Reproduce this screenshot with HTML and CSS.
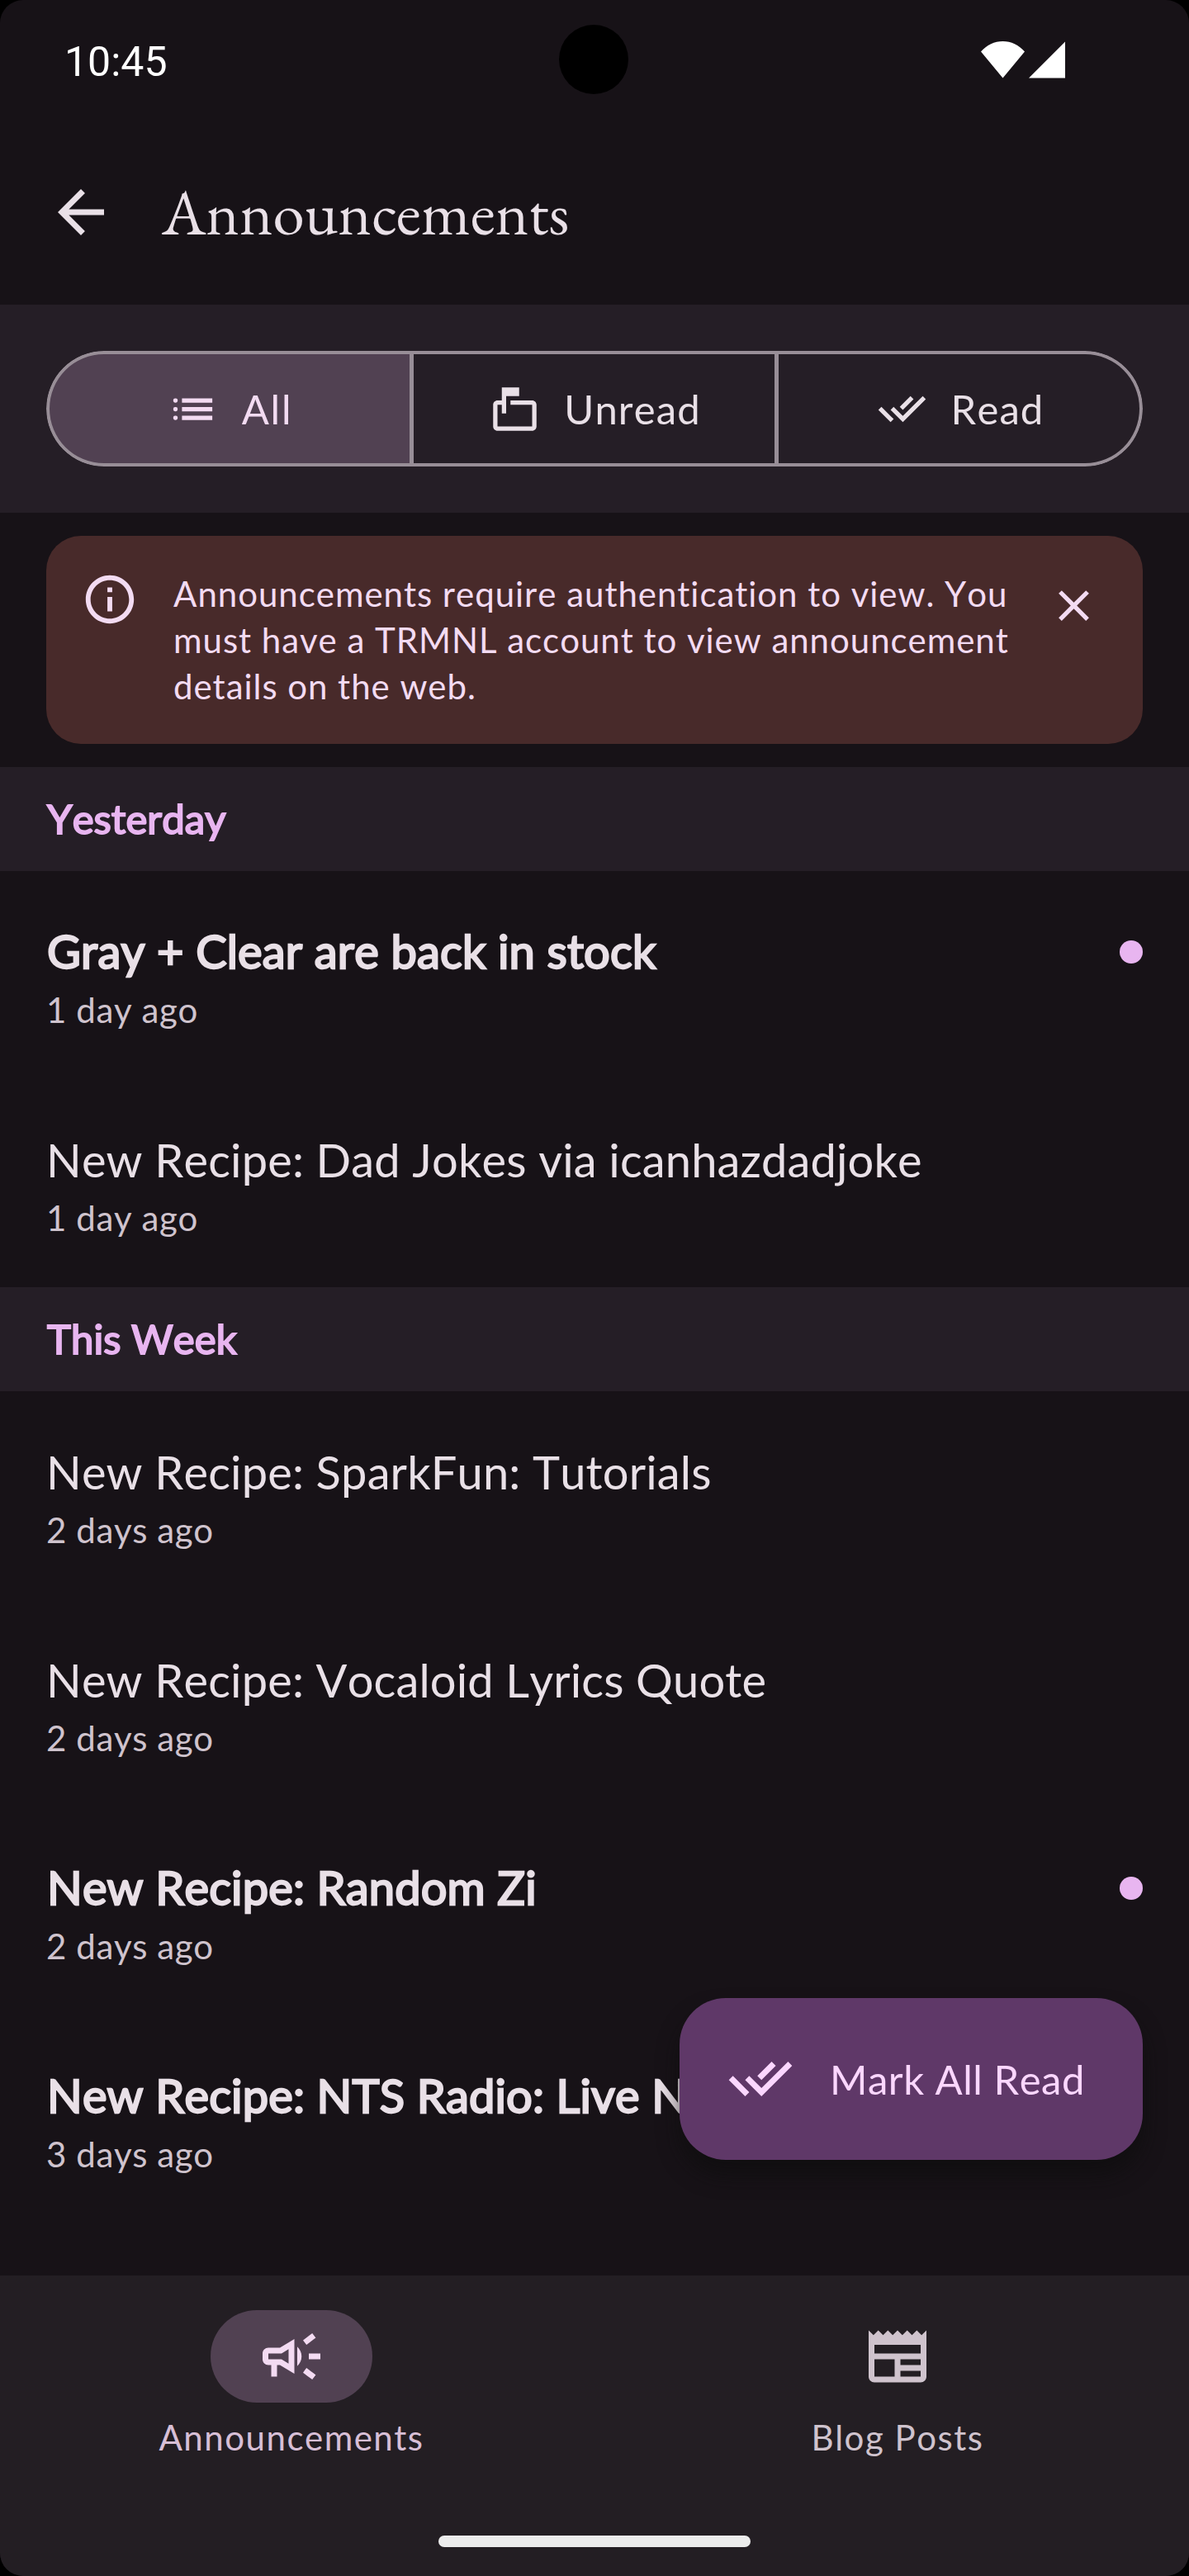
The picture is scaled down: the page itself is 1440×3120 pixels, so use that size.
FILE: index.html
```html
<!DOCTYPE html>
<html lang="en">
<head>
<meta charset="utf-8">
<title>Announcements</title>
<link rel="stylesheet" href="styles.css">
</head>
<body>
<div class="screen">
  <div class="status-bar">
    <span class="clock">10:45</span>
    <span class="camera"></span>
    <svg class="status-icons" viewBox="0 0 102 45"><path d="M0 12.5C7 4.500 16.500 0 26.500 0S46 4.500 53 12.500L26.500 44.500zM102 .5V44.500H58z"/></svg>
  </div>
  <header class="app-bar">
    <svg class="icon-24" viewBox="0 0 24 24"><path d="M20 11H7.830l5.590-5.590L12 4l-8 8 8 8 1.410-1.410L7.830 13H20z"/></svg>
    <h1 class="app-title">Announcements</h1>
  </header>
  <div class="filter-bar">
    <div class="segments">
      <div class="segment selected">
        <svg class="icon-18" viewBox="0 0 24 24"><path d="M7 7h14v2H7zM7 11h14v2H7zM7 15h14v2H7z"/><rect x="3" y="7" width="2" height="2" rx=".8"/><rect x="3" y="11" width="2" height="2" rx=".8"/><rect x="3" y="15" width="2" height="2" rx=".8"/></svg>
        <span>All</span>
      </div>
      <div class="segment">
        <svg class="icon-18" viewBox="0 0 24 24"><path d="M20 8H10v2h10v10H4V10h2v4h2V6h6V2H6v6H4c-1.100 0-2 .9-2 2v10c0 1.100.9 2 2 2h16c1.100 0 2-.9 2-2V10c0-1.100-.9-2-2-2z"/></svg>
        <span>Unread</span>
      </div>
      <div class="segment">
        <svg class="icon-18" viewBox="0 -960 960 960"><path d="M268-240 42-466l57-56 170 170 56 56-57 56Zm226 0L268-466l56-57 170 170 368-368 56 57-424 424Zm0-226-57-56 198-198 57 56-198 198Z"/></svg>
        <span>Read</span>
      </div>
    </div>
  </div>
  <div class="notice">
    <svg class="icon-20" viewBox="0 0 24 24"><path d="M11 7h2v2h-2zm0 4h2v6h-2zm1-9C6.480 2 2 6.480 2 12s4.480 10 10 10 10-4.480 10-10S17.520 2 12 2zm0 18c-4.410 0-8-3.590-8-8s3.590-8 8-8 8 3.590 8 8-3.590 8-8 8z"/></svg>
    <p class="notice-text">Announcements require authentication to view. You must have a TRMNL account to view announcement details on the web.</p>
    <div class="close"><svg class="icon-18" viewBox="0 0 24 24"><path d="M19 6.410L17.590 5 12 10.590 6.410 5 5 6.410 10.590 12 5 17.590 6.410 19 12 13.410 17.590 19 19 17.590 13.410 12z"/></svg></div>
  </div>
  <main class="list">
    <h2 class="section">Yesterday</h2>
    <article class="item unread"><div class="row"><h3 class="title">Gray + Clear are back in stock</h3><span class="dot"></span></div><p class="date">1 day ago</p></article>
    <article class="item"><div class="row"><h3 class="title">New Recipe: Dad Jokes via icanhazdadjoke</h3></div><p class="date">1 day ago</p></article>
    <h2 class="section">This Week</h2>
    <article class="item"><div class="row"><h3 class="title">New Recipe: SparkFun: Tutorials</h3></div><p class="date">2 days ago</p></article>
    <article class="item"><div class="row"><h3 class="title">New Recipe: Vocaloid Lyrics Quote</h3></div><p class="date">2 days ago</p></article>
    <article class="item unread"><div class="row"><h3 class="title">New Recipe: Random Zi</h3><span class="dot"></span></div><p class="date">2 days ago</p></article>
    <article class="item unread"><div class="row"><h3 class="title">New Recipe: NTS Radio: Live N</h3></div><p class="date">3 days ago</p></article>
    <div class="fab">
      <svg class="icon-24" viewBox="0 -960 960 960"><path d="M268-240 42-466l57-56 170 170 56 56-57 56Zm226 0L268-466l56-57 170 170 368-368 56 57-424 424Zm0-226-57-56 198-198 57 56-198 198Z"/></svg>
      <span>Mark All Read</span>
    </div>
  </main>
  <footer class="bottom">
    <nav class="tabs">
      <div class="tab active">
        <div class="pill"><svg class="icon-24" viewBox="0 0 24 24"><path d="M18 11v2h4v-2h-4zm-2 6.610c.96.710 2.210 1.650 3.200 2.390.4-.53.8-1.070 1.200-1.600-.99-.74-2.240-1.680-3.200-2.400-.4.540-.8 1.080-1.200 1.610zM20.400 5.600c-.4-.53-.8-1.070-1.200-1.600-.99.740-2.240 1.680-3.200 2.400.4.530.8 1.070 1.200 1.600.96-.72 2.210-1.650 3.200-2.400zM4 9c-1.100 0-2 .9-2 2v2c0 1.100.9 2 2 2h1v4h2v-4h1l5 3V6L8 9H4zm5.030 1.710L11 9.530v4.940l-1.970-1.180-.48-.29H4v-2h4.550l.48-.29zM15.500 12c0-1.330-.58-2.530-1.500-3.350v6.690c.92-.81 1.500-2.010 1.500-3.340z"/></svg></div>
        <span>Announcements</span>
      </div>
      <div class="tab">
        <div class="pill"><svg class="icon-24" viewBox="0 0 24 24"><path d="M22 3l-1.670 1.670L18.670 3 17 4.670 15.330 3l-1.660 1.670L12 3l-1.670 1.670L8.670 3 7 4.670 5.330 3 3.670 4.670 2 3v16c0 1.100.9 2 2 2h16c1.100 0 2-.9 2-2V3zM11 19H4v-6h7v6zm9 0h-7v-2h7v2zm0-4h-7v-2h7v2zm0-4H4V8h16v3z"/></svg></div>
        <span>Blog Posts</span>
      </div>
    </nav>
    <div class="home-bar"></div>
  </footer>
</div>
</body>
</html>
```
FILE: styles.css
```css
* { box-sizing: border-box; margin: 0; padding: 0; }
body {
  background: #000;
  font-family: Lato, "Liberation Sans", sans-serif;
  font-kerning: none;
}
svg { display: block; flex: none; fill: currentColor; }
h1, h2, h3 { font-weight: 400; }

.screen {
  display: flex;
  flex-direction: column;
  width: 1440px;
  height: 3120px;
  overflow: hidden;
  border-radius: 28px;
  background: #171217;
  color: #e9e0e7;
}
.icon-24 { width: 84px; height: 84px; }
.icon-20 { width: 70px; height: 70px; }
.icon-18 { width: 63px; height: 63px; }

.status-bar {
  display: grid;
  grid-template-columns: 599px 84px 1fr;
  align-items: center;
  height: 144px;
  padding-left: 78px;
  color: #fff;
}
.clock { font: 50px/58px Roboto, sans-serif; padding-top: 6px; }
.camera { width: 84px; height: 84px; border-radius: 50%; background: #000; }
.status-icons { width: 102px; height: 45px; margin-left: 427px; }

.app-bar {
  display: flex;
  align-items: center;
  gap: 56px;
  height: 225px;
  padding: 1px 0 0 56px;
}
.app-title {
  font: 400 77px/98px "EB Garamond", "Liberation Serif", serif;
  font-kerning: normal;
}

.filter-bar { height: 252px; padding: 56px; background: #251e26; }
.segments {
  display: grid;
  grid-template-columns: 445px 442px 1fr;
  height: 140px;
  overflow: hidden;
  border-radius: 70px;
}
.segment {
  display: flex;
  align-items: center;
  justify-content: center;
  gap: 28px;
  border: solid #988e97;
  border-width: 4px 5px 4px 0;
  padding-left: 2px;
  font-size: 49px;
  letter-spacing: 1.1px;
}
.segment:first-child { padding-left: 0; border-left-width: 4px; border-radius: 70px 0 0 70px; }
.segment:last-child { border-right-width: 4px; border-radius: 0 70px 70px 0; }
.segment.selected { background: #514152; color: #f3dbf2; letter-spacing: 1.8px; }

.notice {
  display: flex;
  height: 252px;
  margin: 28px 56px;
  padding: 42px;
  border-radius: 42px;
  background: #482a2a;
  color: #f3dbf2;
}
.notice-text {
  width: 1036px;
  margin: 0 12px 0 42px;
  font-size: 42px;
  line-height: 56px;
  letter-spacing: .96px;
}
.close { display: grid; place-items: center; width: 84px; height: 84px; }

.list { position: relative; flex: 1; }
.section {
  height: 126px;
  padding: 27px 57px;
  background: #251e26;
  color: #e8b5f0;
  font-size: 49px;
  line-height: 70px;
  letter-spacing: .05px;
  -webkit-text-stroke: 2px currentColor;
}
.item { height: 252px; padding: 56px; }
.row { display: flex; align-items: center; justify-content: space-between; height: 84px; }
.title { font-size: 56px; line-height: 84px; letter-spacing: .15px; white-space: nowrap; }
.unread .title { transform: translate(1px, -1px); -webkit-text-stroke: 2.3px currentColor; }
.dot { width: 28px; height: 28px; border-radius: 50%; background: #e8b5f0; }
.date { color: #cfc3cd; font-size: 42px; line-height: 56px; letter-spacing: .6px; }

.fab {
  position: absolute;
  right: 56px;
  bottom: 140px;
  display: flex;
  align-items: center;
  gap: 42px;
  width: 561px;
  height: 196px;
  padding-left: 56px;
  border-radius: 56px;
  background: #5f3868;
  color: #fbd7ff;
  font-size: 49px;
  letter-spacing: .5px;
  white-space: nowrap;
  box-shadow: 0 18px 26px #0d0d0da0;
}

.bottom { height: 364px; padding-top: 42px; background: #231e23; }
.tabs { display: flex; gap: 28px; }
.tab {
  flex: 1;
  display: flex;
  flex-direction: column;
  align-items: center;
  gap: 14px;
  color: #cfc3cd;
  font-size: 42px;
  line-height: 56px;
  letter-spacing: 1.5px;
}
.tab.active { color: #d7bfd6; }
.pill { display: grid; place-items: center; width: 196px; height: 112px; border-radius: 56px; }
.active .pill { background: #514152; color: #f3dbf2; }
.home-bar { width: 378px; height: 14px; margin: 91px auto 0; border-radius: 7px; background: #ececec; }
```
